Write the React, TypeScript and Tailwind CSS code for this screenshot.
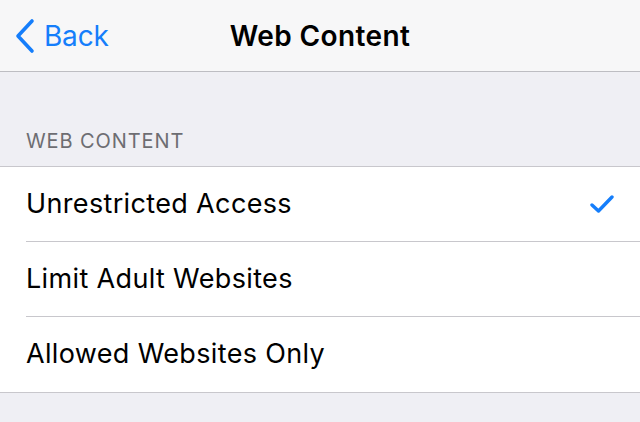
import React, { useState } from 'react';

const options = ['Unrestricted Access', 'Limit Adult Websites', 'Allowed Websites Only'];

const App: React.FC = () => {
  const [selected, setSelected] = useState(0);

  return (
    <div className="w-[640px] h-[422px] overflow-hidden bg-[#efeff4] font-['Inter',sans-serif]">
      <div className="h-[72px] flex items-center relative bg-[#f7f7f8] border-b border-[#bdbdc2]">
        <button className="flex items-center gap-[8px] pl-[14px] text-[#157efb]">
          <svg width="22" height="36" viewBox="0 0 22 36" fill="none">
            <path d="M18 3 L4 18 L18 33" stroke="#157efb" strokeWidth="3.6" strokeLinecap="round" strokeLinejoin="round" />
          </svg>
          <span className="text-[28px] leading-none tracking-[-0.2px]">Back</span>
        </button>
        <h1 className="absolute left-0 right-0 text-center text-[28px] font-semibold text-black pointer-events-none tracking-[0.4px]">
          Web Content
        </h1>
      </div>

      <div className="h-[94px] flex items-end pl-[26px] pb-[10px]">
        <span className="text-[20px] text-[#6d6d72] tracking-[0.9px]">WEB CONTENT</span>
      </div>

      <div className="bg-white border-y border-[#c8c7cc]">
        {options.map((opt, i) => (
          <div key={opt} className="pl-[26px]" onClick={() => setSelected(i)}>
            <div className={`h-[75px] flex items-center justify-between pr-[26px] ${i < options.length - 1 ? 'border-b border-[#c8c7cc]' : 'h-[74px]'}`}>
              <span className="text-[27px] text-black tracking-[0.35px]">{opt}</span>
              {selected === i && (
                <svg width="24" height="20" viewBox="0 0 24 20" fill="none">
                  <path d="M2 11 L8.5 17 L22 3" stroke="#157efb" strokeWidth="3.4" strokeLinecap="round" strokeLinejoin="round" />
                </svg>
              )}
            </div>
          </div>
        ))}
      </div>
    </div>
  );
};

export default App;
